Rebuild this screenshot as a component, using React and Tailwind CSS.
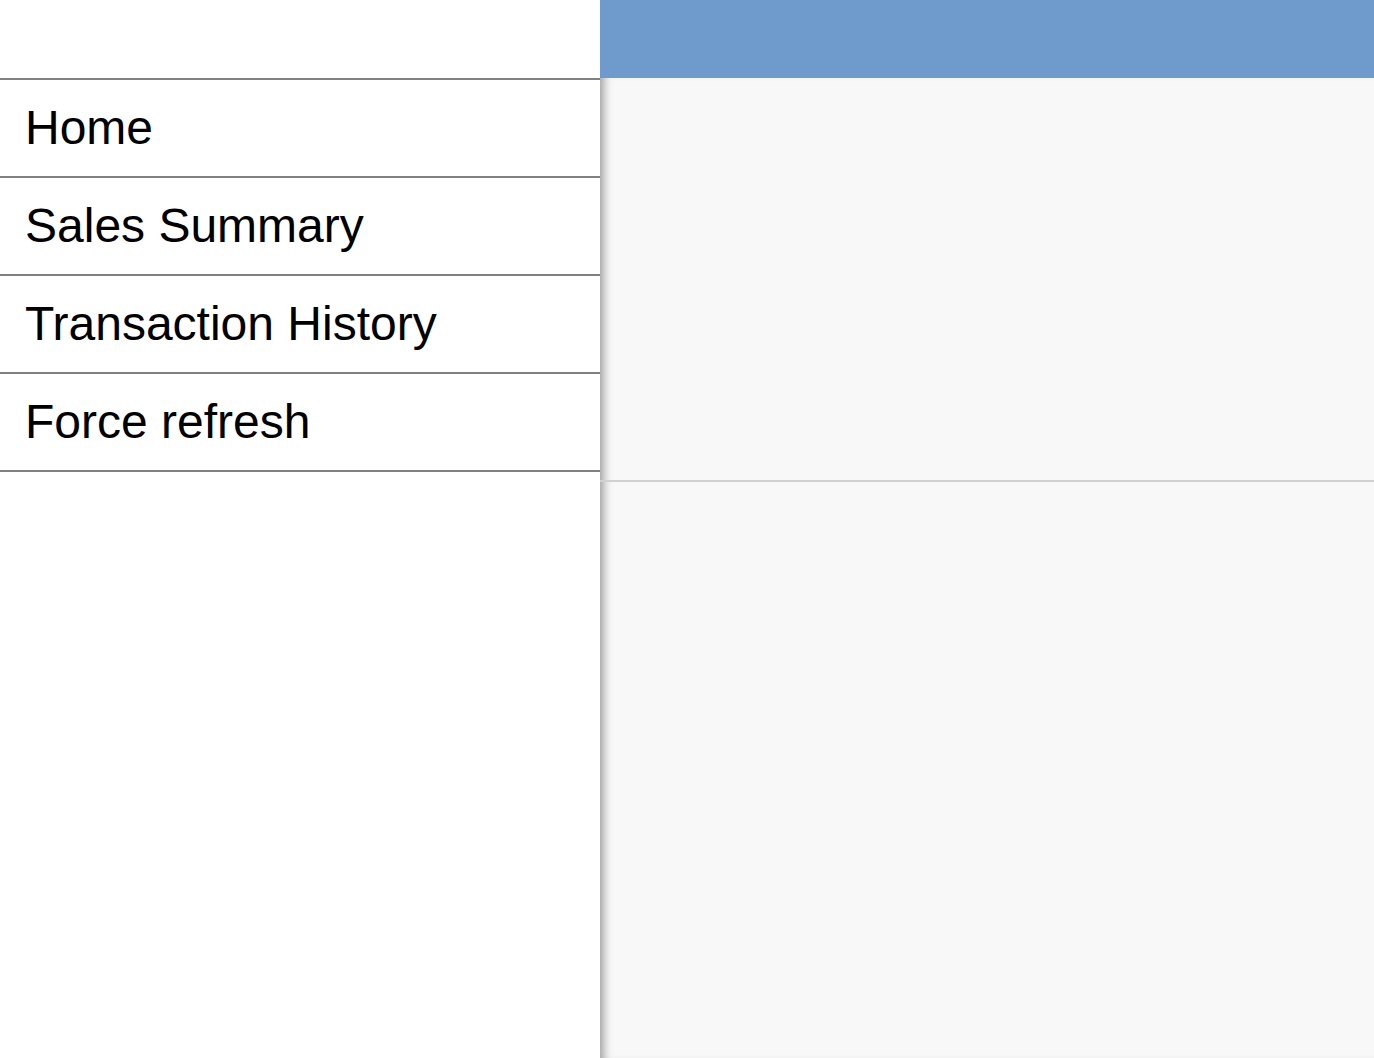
export default function App() {
    const items = ['Home', 'Sales Summary', 'Transaction History', 'Force refresh']

    return <div className="flex h-[1058px] w-full overflow-hidden bg-white" style={{ fontFamily: '"Liberation Sans", Arial, sans-serif' }}>
        <div className="w-[600px] shrink-0 flex flex-col bg-white">
            <div className="h-[80px] border-b-2 border-[#808080]"></div>
            {items.map(item => (
                <div key={item} className="h-[98px] border-b-2 border-[#808080] flex items-center pl-[25px] text-[48px] text-black">
                    {item}
                </div>
            ))}
        </div>
        <div className="flex-1 flex flex-col">
            <div className="h-[78px] bg-[#6f9bcc]"></div>
            <div className="flex-1 bg-[#f8f8f8] shadow-[inset_10px_0_8px_-6px_rgba(0,0,0,0.35)]">
                <div className="h-[404px] border-b-2 border-[#d0d0d0]"></div>
            </div>
        </div>
    </div>
}
